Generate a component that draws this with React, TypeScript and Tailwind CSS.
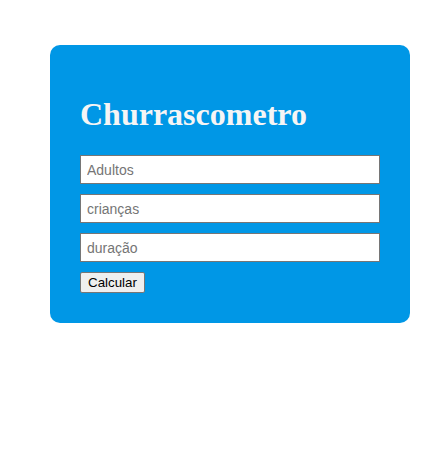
export default function App() {
  return (
    <div className="min-h-screen bg-white pl-[50px] pt-[45px] font-['Liberation_Sans',Arial,sans-serif]">
      <div className="w-[360px] rounded-[10px] bg-[#0097e6] p-[30px]">
        <h1 className="mb-[22px] mt-[21px] font-['Liberation_Serif','Times_New_Roman',serif] text-[32px] font-bold leading-[37px] text-[#f5f5f5]">
          Churrascometro
        </h1>
        <input
          type="text"
          placeholder="Adultos"
          className="mb-[10px] block h-[29px] w-[300px] border border-[#767676] bg-white px-[6px] text-[14px] text-black outline-none placeholder:text-[#757575]"
        />
        <input
          type="text"
          placeholder="crianças"
          className="mb-[10px] block h-[29px] w-[300px] border border-[#767676] bg-white px-[6px] text-[14px] text-black outline-none placeholder:text-[#757575]"
        />
        <input
          type="text"
          placeholder="duração"
          className="mb-[10px] block h-[29px] w-[300px] border border-[#767676] bg-white px-[6px] text-[14px] text-black outline-none placeholder:text-[#757575]"
        />
        <button className="block h-[21px] rounded-[2px] border border-[#767676] bg-[#efefef] px-[7px] text-[13.33px] leading-none text-black">
          Calcular
        </button>
      </div>
    </div>
  );
}
